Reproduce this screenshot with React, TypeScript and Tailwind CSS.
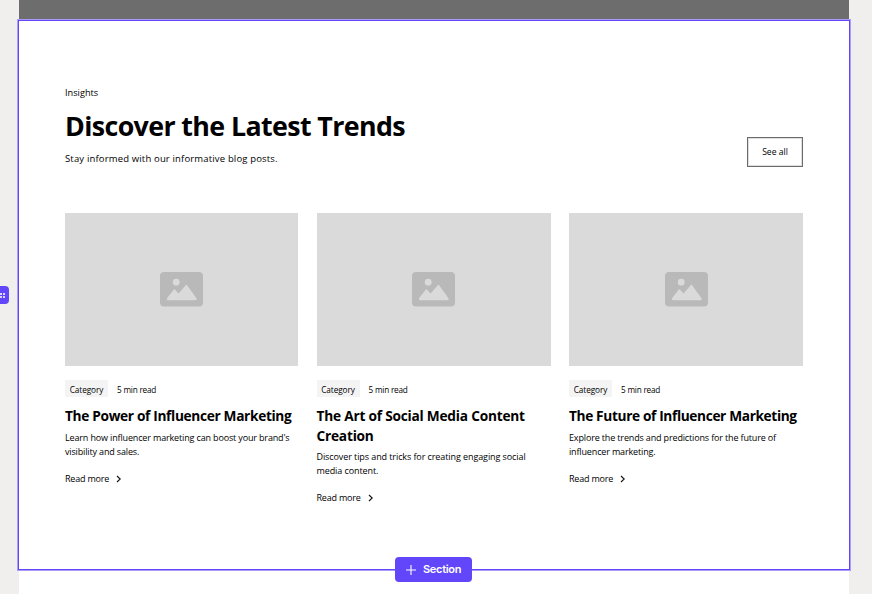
import React from "react";

type Post = { title: string[]; body: string[]; titleTracking: string; bodyTracking: string };

const posts: Post[] = [
  {
    title: ["The Power of Influencer Marketing"],
    body: ["Learn how influencer marketing can boost your brand's", "visibility and sales."],
    titleTracking: "tracking-[-0.33px]",
    bodyTracking: "tracking-[-0.15px]",
  },
  {
    title: ["The Art of Social Media Content", "Creation"],
    body: ["Discover tips and tricks for creating engaging social", "media content."],
    titleTracking: "tracking-[-0.22px]",
    bodyTracking: "tracking-[-0.09px]",
  },
  {
    title: ["The Future of Influencer Marketing"],
    body: ["Explore the trends and predictions for the future of", "influencer marketing."],
    titleTracking: "tracking-[-0.36px]",
    bodyTracking: "tracking-[-0.15px]",
  },
];

function Placeholder() {
  return (
    <div className="flex h-[153px] items-center justify-center bg-[#dadada]">
      <svg width="43" height="35" viewBox="0 0 43 35">
        <rect width="43" height="34.5" rx="4" fill="#b9b9b9" />
        <circle cx="16.2" cy="10.2" r="3.4" fill="#dadada" />
        <path d="M7 26.3 13.8 17.4Q14.3 16.9 14.8 17.4L18.6 21.6 25.9 13.1Q26.4 12.5 26.9 13.1L36.5 26.3Q37.2 28.2 35.8 28.2H7.8Q6.3 28 7 26.3Z" fill="#dadada" />
      </svg>
    </div>
  );
}

function Card({ post }: { post: Post }) {
  return (
    <article className="flex flex-col">
      <Placeholder />
      <div className="mt-[14px] flex h-[17px] items-center text-[8.2px] leading-[14px]">
        <span className="flex h-[17px] w-[43px] items-center justify-center bg-[#f4f4f4] pt-[2px] font-medium tracking-[-0.05px]">Category</span>
        <span className="ml-[9px] pt-[2px] tracking-[-0.2px] whitespace-nowrap">5 min read</span>
      </div>
      <h2 className={`mt-[9px] text-[13.7px] leading-[19.6px] font-bold whitespace-nowrap ${post.titleTracking}`}>
        {post.title.map((line) => <div key={line}>{line}</div>)}
      </h2>
      <p className={`mt-[5px] text-[9px] leading-[14px] whitespace-nowrap ${post.bodyTracking}`}>
        {post.body.map((line) => <span key={line} className="block">{line}</span>)}
      </p>
      <a className="mt-[13px] flex h-[14px] items-center text-[9px] leading-[14px] tracking-[-0.2px]">
        <span className="w-[44px] whitespace-nowrap">Read more</span>
        <svg className="ml-[7px]" width="6" height="8" viewBox="0 0 6 8" fill="none" stroke="#111" strokeWidth="1.1">
          <path d="M1 1 4.2 4 1 7" />
        </svg>
      </a>
    </article>
  );
}

export default function App() {
  return (
    <main className="relative h-[594px] w-[872px] overflow-hidden bg-[#f0efee] font-['Open_Sans',sans-serif] text-black">
      <div className="ml-[19px] flex h-[594px] w-[830px] flex-col bg-white">
        <div className="h-[20px] shrink-0 bg-[#6d6d6d]" />
        <section className="-mx-px h-[550px] shrink-0 border border-[#6246fa] bg-white px-[46px] pt-[65px] shadow-[0_0_0_1px_#a99cfb]">
          <header className="flex h-[127px] justify-between">
            <div className="flex flex-col whitespace-nowrap">
              <div className="h-[14px] text-[9.2px] leading-[14px]">Insights</div>
              <h1 className="mt-[8px] h-[36px] text-[26.8px] leading-[36px] font-bold tracking-[-0.62px]">Discover the Latest Trends</h1>
              <p className="mt-[8px] text-[9.5px] leading-[14px] tracking-[0.16px]">Stay informed with our informative blog posts.</p>
            </div>
            <button className="mt-[51px] h-[30px] w-[56px] border border-[#6b6b6b] text-[8.6px] shadow-[inset_0_0_0_1px_#dedede]">See all</button>
          </header>
          <div className="grid grid-cols-[233px_234px_234px] gap-x-[18.5px]">
            {posts.map((post) => <Card key={post.title[0]} post={post} />)}
          </div>
        </section>
      </div>
      <div className="absolute top-[286px] left-[-9px] flex h-[18px] w-[18px] items-center justify-end rounded-[4px] bg-[#6246fa] pr-[4px]">
        <div className="grid grid-cols-2 gap-[1px]">
          {[0, 1, 2, 3].map((n) => <i key={n} className="size-[2px] bg-[#dcd6ff]" />)}
        </div>
      </div>
      <button className="absolute top-[557px] left-[395px] flex h-[25px] w-[77px] items-center rounded-[4px] bg-[#6246fa] pl-[11px] font-['Inter',sans-serif] text-[11px] font-semibold text-white">
        <svg className="mr-[7px]" width="10" height="10" viewBox="0 0 10 10" stroke="white" strokeWidth="1.1"><path d="M5 0V10M0 5H10" /></svg>
        <span className="tracking-[-0.3px]">Section</span>
      </button>
    </main>
  );
}
